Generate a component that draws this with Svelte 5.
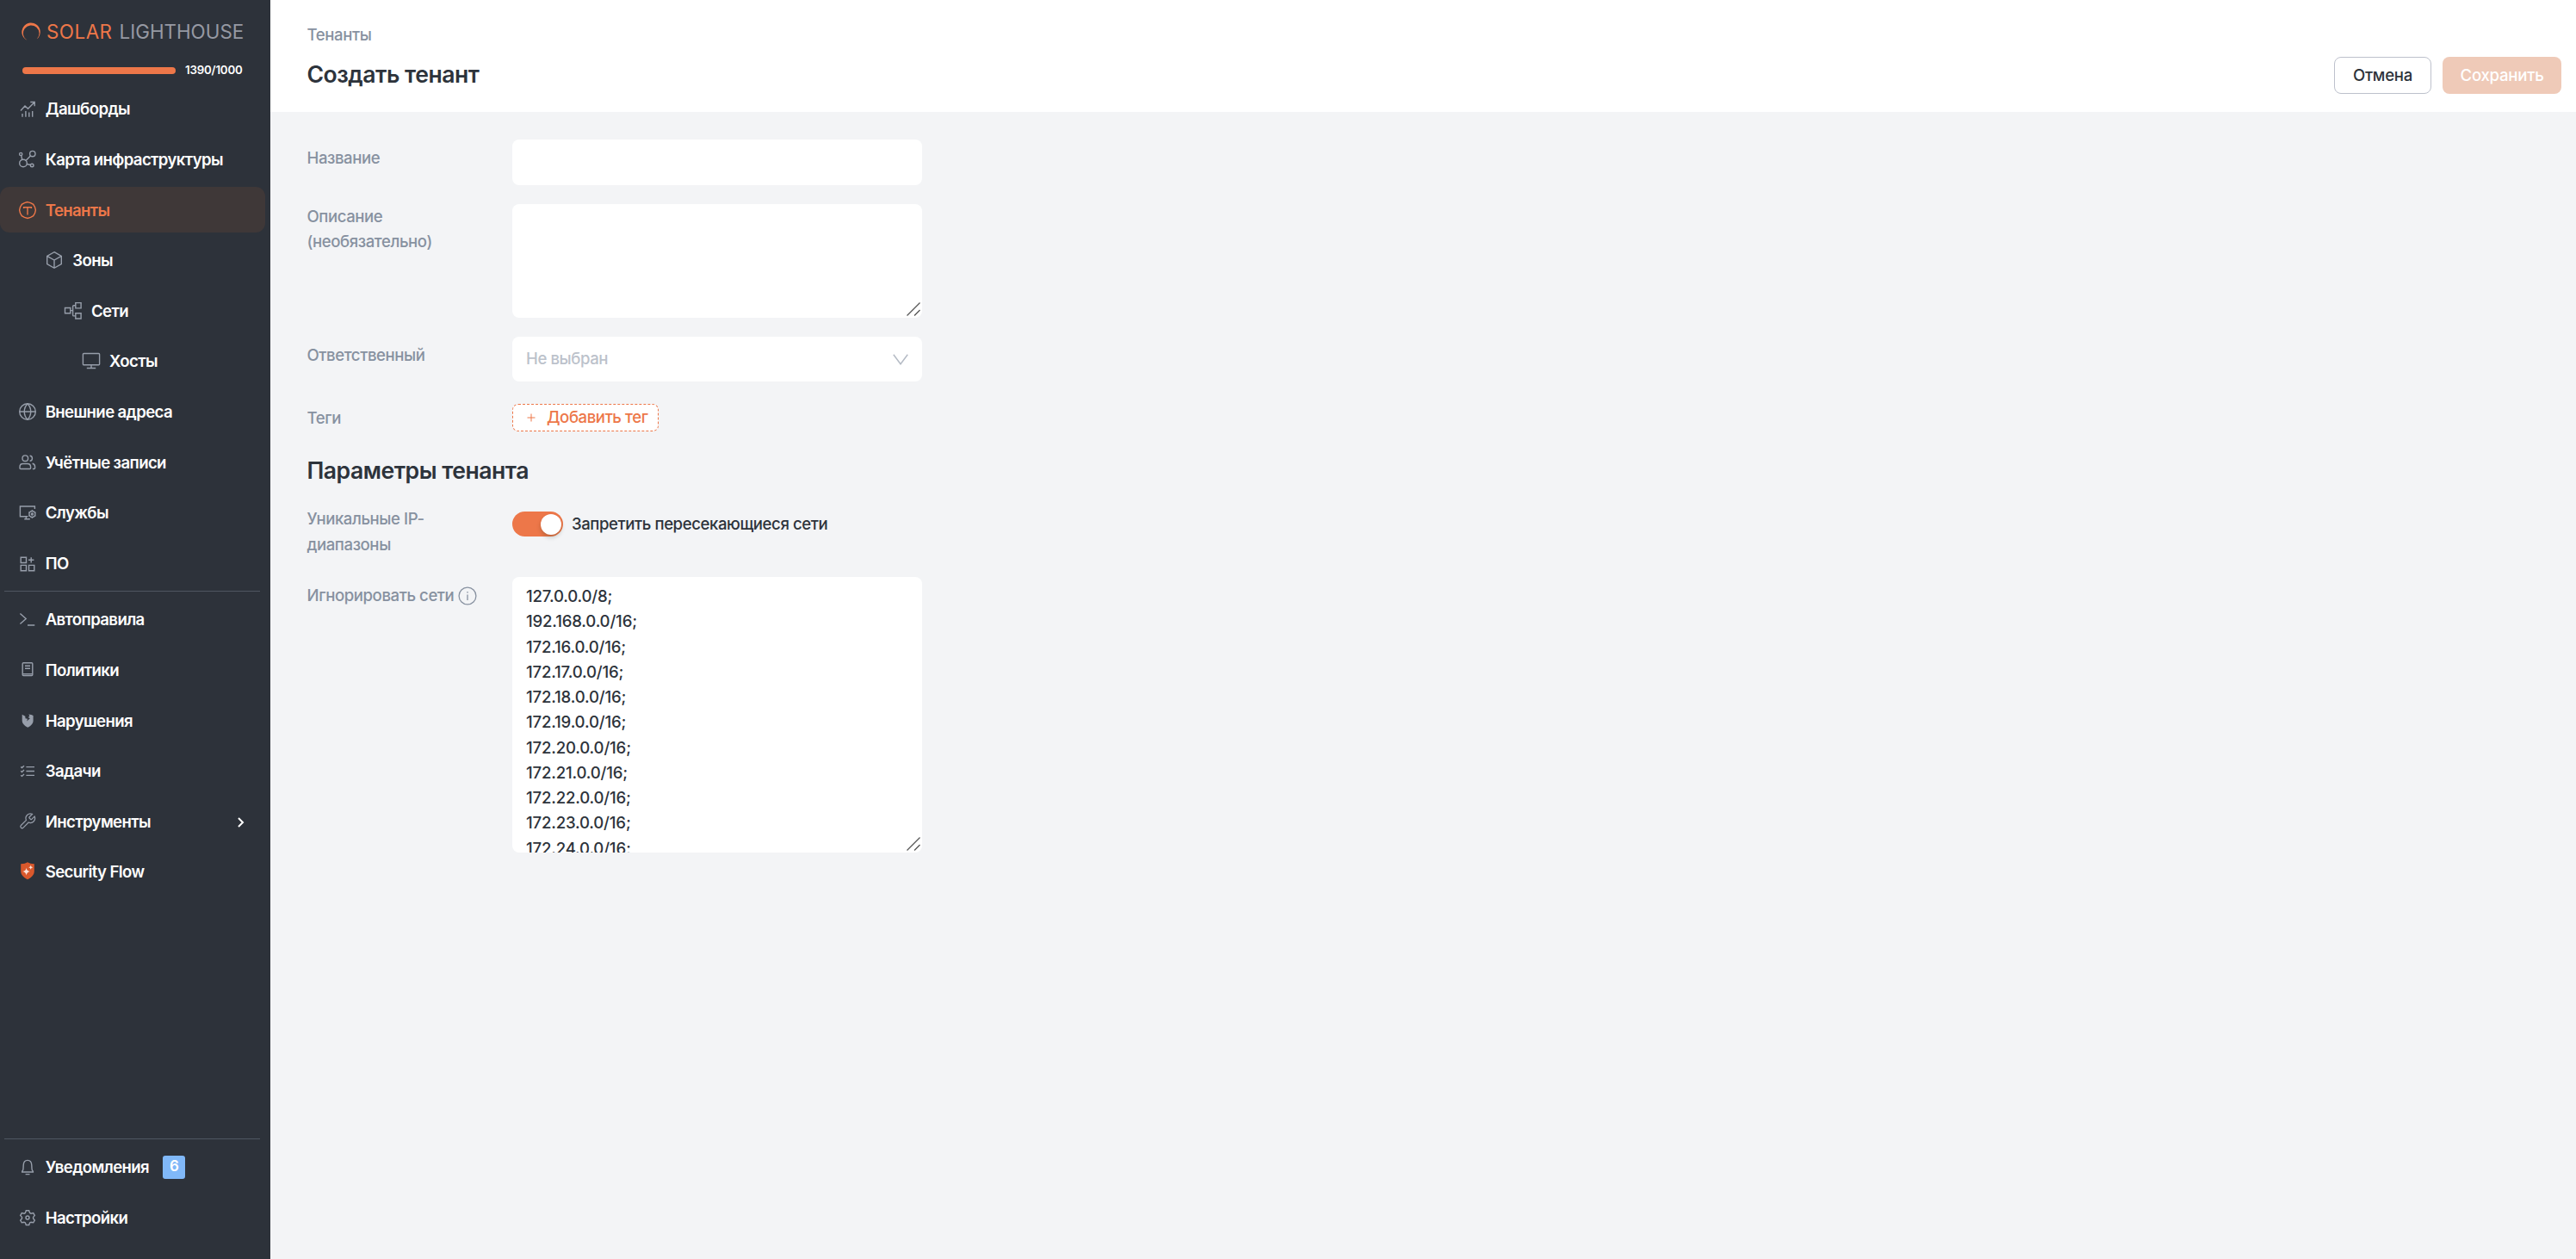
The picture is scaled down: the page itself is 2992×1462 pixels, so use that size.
<script lang="ts">
  type NavItem = {
    label: string
    icon: string
    level?: number
    active?: boolean
    arrow?: boolean
    badge?: number
  }

  const assets: NavItem[] = [
    { label: 'Дашборды', icon: 'dashboard' },
    { label: 'Карта инфраструктуры', icon: 'map' },
    { label: 'Тенанты', icon: 'tenant', active: true },
    { label: 'Зоны', icon: 'cube', level: 1 },
    { label: 'Сети', icon: 'network', level: 2 },
    { label: 'Хосты', icon: 'host', level: 3 },
    { label: 'Внешние адреса', icon: 'globe' },
    { label: 'Учётные записи', icon: 'users' },
    { label: 'Службы', icon: 'service' },
    { label: 'ПО', icon: 'apps' },
  ]

  const control: NavItem[] = [
    { label: 'Автоправила', icon: 'terminal' },
    { label: 'Политики', icon: 'policy' },
    { label: 'Нарушения', icon: 'violation' },
    { label: 'Задачи', icon: 'tasks' },
    { label: 'Инструменты', icon: 'wrench', arrow: true },
    { label: 'Security Flow', icon: 'shield' },
  ]

  const bottom: NavItem[] = [
    { label: 'Уведомления', icon: 'bell', badge: 6 },
    { label: 'Настройки', icon: 'gear' },
  ]

  const icons: Record<string, string> = {
    dashboard:
      '<path d="M4 13.5 9 8l3.5 3.2L20 3.7M15.3 3.5h4.9v4.7M6 17v3.8M9.9 14v6.8M13.8 15.5v5.3M17.7 14v6.8"/>',
    map: '<circle cx="4.2" cy="6" r="1.6"/><circle cx="17.8" cy="5.6" r="3.2"/><circle cx="7" cy="16.5" r="4.3"/><circle cx="17.2" cy="19" r="1.8"/><path d="m4.7 7.6 1 4.8M10 13.4l5.4-5.5M11.2 17.5l4.2 1"/>',
    tenant:
      '<path d="M12 2.6 15.6 3.6 18.7 5.3 20.5 8.4 21.4 12 20.5 15.6 18.7 18.7 15.6 20.4 12 21.4 8.4 20.4 5.3 18.7 3.5 15.6 2.6 12 3.5 8.4 5.3 5.3 8.4 3.6Z"/><path d="M7.6 10V8.7h8.8V10M12 8.7v8.7"/>',
    cube: '<path d="m12 2.7 8.3 4.6v9.4L12 21.3l-8.3-4.6V7.3ZM3.7 7.3 12 12l8.3-4.7M12 12v9.3"/>',
    network:
      '<path d="M2.5 8.5h6.3v6.3H2.5ZM14.8 2.6h6.3v6.3h-6.3ZM14.8 14.7h6.3V21h-6.3ZM8.8 11.6h2.8M14.8 5.7h-2.2q-1 0-1 1v10.2q0 1 1 1h2.2"/>',
    host: '<rect x="2.4" y="3.5" width="19.2" height="13.2" rx="1"/><path d="M12 16.7v3.8M6.8 20.5h10.4"/>',
    globe:
      '<circle cx="12" cy="12" r="9.3"/><path d="M2.7 12h18.6M12 2.7c-5 5.2-5 13.4 0 18.6M12 2.7c5 5.2 5 13.4 0 18.6"/>',
    users:
      '<circle cx="9.3" cy="7.2" r="3.3"/><path d="M3 18.5v-1.3q0-3.7 3.8-3.7h5q3.8 0 3.8 3.7v1.3q0 1-1 1H4q-1 0-1-1ZM14.6 4.2c3.8.2 3.8 5.8 0 6M17.6 13.2c2.3.5 3 1.8 3 3.7v1.5q0 1.1-1.1 1.1h-1.6"/>',
    service:
      '<path d="M20.4 8V5H3.4v11.8h9M10.3 16.8v2.8M8.3 19.7h6.5"/><circle cx="17.4" cy="14" r="3.5"/><circle cx="17.4" cy="14" r="1"/><path d="M17.4 9.3v1.2M17.4 17.5v1.2M13.4 11.7l1 .6M20.4 15.7l1 .6M13.4 16.3l1-.6M20.4 12.3l1-.6"/>',
    apps: '<path d="M4.2 5.2h6.3v6.3H4.2ZM4.2 14.4h6.3v6.3H4.2ZM13.5 14.4h6.3v6.3h-6.3ZM16.2 5.2v6.3M13 8.3h6.4"/>',
    terminal: '<path d="m3.4 5.4 6.8 6.1-6.8 6.1M12 19h8.3"/>',
    policy: '<rect x="6.2" y="3.7" width="11.6" height="14.8" rx="1"/><path d="M9 7.3h6M9 10.3h6M6.2 16.6h11.6"/>',
    violation:
      '<path fill="currentColor" stroke="none" d="m5.7 4.8 3.6 2 .2 2.4 2.5.6-.8 2.800 3.800-3.600-2.200-.8 1.600-2-1.200-1.800 3.200.5 2.200 1v5.800c0 3.300-2.500 6.200-6.300 8.100-3.800-1.900-6.600-4.800-6.600-8.100Z"/>',
    tasks:
      '<path d="M10.4 7.6H20M10.4 12.5H20M10.4 17.4H20M4.2 7.4l1.3 1.2L8 6.2M4.2 12.3l1.3 1.2L8 11.1M4.2 17.2l1.3 1.2L8 16"/>',
    wrench:
      '<path transform="translate(1.2 1.2) scale(.88)" d="M14.7 6.3a1 1 0 0 0 0 1.4l1.6 1.6a1 1 0 0 0 1.4 0l3.77-3.77a6 6 0 0 1-7.94 7.94l-6.91 6.91a2.12 2.12 0 0 1-3-3l6.91-6.91a6 6 0 0 1 7.94-7.94Z"/>',
    bell: '<path d="M5.7 18v-.7Q7 16.200 7 14.100l.2-4C7.400 6.600 9 4.400 12 4.400s4.600 2.200 4.800 5.700l.2 4q0 2.100 1.400 3.200v.7ZM9.600 20.600h4.900"/>',
    gear: '<path d="M10.300 3.800h3.400l.9 2.600 1.500.8 2.600-.6 1.600 2.800-1.700 2v1.500l1.700 2.200-1.600 2.700-2.700-.6-1.400.8-.9 2.500h-3.400l-.9-2.500-1.400-.8-2.700.6-1.600-2.700 1.800-2.200v-1.500L3.700 9.400l1.600-2.800 2.700.6 1.400-.8Z"/><circle cx="12" cy="12" r="2"/>',
    shield:
      '<path fill="#d9582c" stroke="none" d="M12 1.300c2 1.300 4.600 1.900 7.800 1.900v8.600c0 4.300-3.600 7.500-7.800 9.400-4.200-1.900-7.800-5.100-7.800-9.400V3.200c3.200 0 5.800-.6 7.800-1.900Z"/><path fill="#fbe3d9" stroke="none" d="M10.600 7.800q.6 3.700 4.300 4.300-3.700.6-4.300 4.300-.6-3.700-4.300-4.300 3.700-.6 4.300-4.300ZM15.700 4.800q.3 2.200 2.500 2.500-2.200.3-2.500 2.500-.3-2.200-2.500-2.500 2.200-.3 2.500-2.500Z"/>',
  }

  const networks = [
    '127.0.0.0/8;',
    '192.168.0.0/16;',
    ...Array.from({ length: 16 }, (_, i) => `172.${i + 16}.0.0/16;`),
  ].join('\n')

  let uniqueRanges = $state(true)
</script>

{#snippet nav(items: NavItem[])}
  <ul class="nav">
    {#each items as item (item.label)}
      <li class="nav-item level-{item.level ?? 0}" class:active={item.active}>
        <svg class="nav-icon" viewBox="0 0 24 24">{@html icons[item.icon]}</svg>
        <span>{item.label}</span>
        {#if item.badge}
          <span class="badge">{item.badge}</span>
        {/if}
        {#if item.arrow}
          <svg class="nav-arrow" viewBox="0 0 10 14"><path d="m2 2 5 5-5 5" /></svg>
        {/if}
      </li>
    {/each}
  </ul>
{/snippet}

{#snippet grip()}
  <svg class="grip" viewBox="0 0 16 16"><path d="m.5 15.5 15-15M9 15.5 15.5 9" /></svg>
{/snippet}

<div class="layout">
  <aside class="sidebar">
    <div class="logo">
      <svg class="logo-mark" viewBox="0 0 22 22">
        <path d="M6.5 20.8A10.7 10.7 0 1 1 17.7 19.5A9.3 9.3 0 1 0 6.5 20.8Z" />
      </svg>
      <span class="logo-solar">SOLAR</span>
      <span class="logo-name">LIGHTHOUSE</span>
    </div>
    <div class="license">
      <div class="license-bar"></div>
      <span class="license-count">1390/1000</span>
    </div>
    {@render nav(assets)}
    <hr />
    {@render nav(control)}
    <div class="spacer"></div>
    <hr />
    {@render nav(bottom)}
  </aside>

  <div class="page">
    <header class="header">
      <div class="heading">
        <div class="breadcrumb">Тенанты</div>
        <h1>Создать тенант</h1>
      </div>
      <div class="actions">
        <button class="btn cancel">Отмена</button>
        <button class="btn save" disabled>Сохранить</button>
      </div>
    </header>

    <main class="form">
      <div class="row">
        <label class="label" for="name">Название</label>
        <input id="name" class="field" type="text" />
      </div>
      <div class="row row-top">
        <label class="label" for="description">Описание<br />(необязательно)</label>
        <div class="area">
          <textarea id="description" class="field description"></textarea>
          {@render grip()}
        </div>
      </div>
      <div class="row">
        <span class="label">Ответственный</span>
        <div class="field select">
          <span>Не выбран</span>
          <svg class="select-arrow" viewBox="0 0 18 13"><path d="m.8.8 8.2 11 8.2-11" /></svg>
        </div>
      </div>
      <div class="row row-tags">
        <span class="label">Теги</span>
        <button class="add-tag">
          <svg class="plus" viewBox="0 0 10 10"><path d="M5 .5v9M.5 5h9" /></svg>
          Добавить тег
        </button>
      </div>

      <h2>Параметры тенанта</h2>

      <div class="row row-switch">
        <span class="label">Уникальные IP-<br />диапазоны</span>
        <div class="switch-line">
          <button
            class="switch"
            class:on={uniqueRanges}
            role="switch"
            aria-checked={uniqueRanges}
            aria-label="Уникальные IP-диапазоны"
            onclick={() => (uniqueRanges = !uniqueRanges)}
          ></button>
          <span>Запретить пересекающиеся сети</span>
        </div>
      </div>
      <div class="row">
        <label class="label label-info" for="ignored">
          Игнорировать сети
          <svg class="info" viewBox="0 0 22 22">
            <circle cx="11" cy="11" r="9.9" />
            <path d="M11 9.5V16M11 6v1.6" />
          </svg>
        </label>
        <div class="area">
          <textarea id="ignored" class="field ignored" value={networks}></textarea>
          {@render grip()}
        </div>
      </div>
    </main>
  </div>
</div>

<style>
  :global(body) {
    margin: 0;
    background: #f3f4f6;
  }
  .layout {
    display: flex;
    height: 1462px;
    overflow: hidden;
    font-family: Inter, 'Liberation Sans', sans-serif;
    font-size: 18.6px;
    font-weight: 500;
    line-height: 29.25px;
    letter-spacing: -0.43px;
    color: #2d333b;
  }
  button,
  input,
  textarea {
    font: inherit;
    letter-spacing: inherit;
    color: inherit;
  }

  .sidebar {
    width: 314px;
    flex: none;
    box-sizing: border-box;
    display: flex;
    flex-direction: column;
    background: #2d323a;
    color: #fff;
    padding-bottom: 16px;
  }
  .logo {
    display: flex;
    align-items: center;
    height: 30px;
    padding: 22px 0 0 25px;
    font-size: 22.4px;
    font-weight: 400;
    white-space: nowrap;
  }
  .logo-mark {
    width: 22px;
    height: 22px;
    margin-right: 7px;
    fill: #ed7749;
  }
  .logo-solar {
    width: 84.5px;
    color: #ed7749;
    letter-spacing: 0.5px;
  }
  .logo-name {
    color: #9699a3;
    letter-spacing: 0;
  }
  .license {
    display: flex;
    align-items: center;
    gap: 11px;
    height: 20px;
    margin: 20px 0 8px 26px;
  }
  .license-bar {
    width: 178px;
    height: 8px;
    border-radius: 4px;
    background: #ed7749;
  }
  .license-count {
    font-size: 13.3px;
    font-weight: 600;
    letter-spacing: -0.2px;
  }

  .nav {
    margin: 0;
    padding: 0;
    list-style: none;
  }
  .nav-item {
    display: flex;
    align-items: center;
    width: 308px;
    height: 53px;
    margin-bottom: 5.6px;
    box-sizing: border-box;
    padding-left: 19.7px;
    font-weight: 600;
    letter-spacing: -0.62px;
    white-space: nowrap;
  }
  .level-1 {
    padding-left: 51.3px;
  }
  .level-2 {
    padding-left: 73px;
  }
  .level-3 {
    padding-left: 94px;
  }
  .nav-icon {
    width: 24px;
    height: 24px;
    flex: none;
    margin-right: 9px;
    color: #979eaa;
    fill: none;
    stroke: currentColor;
    stroke-width: 1.4;
  }
  .nav-icon + span {
    padding-top: 1px;
  }
  .active {
    background: #3f3838;
    border-radius: 11px;
    color: #ed7749;
  }
  .active .nav-icon {
    color: #ed7749;
  }
  .badge {
    width: 26px;
    height: 27px;
    margin-left: 16px;
    border-radius: 3px;
    background: #80b8f8;
    font-size: 17px;
    line-height: 25px;
    text-align: center;
  }
  .nav-arrow {
    width: 10px;
    height: 14px;
    margin: 2px 23px 0 auto;
    fill: none;
    stroke: #fff;
    stroke-width: 2;
  }
  hr {
    width: 297px;
    height: 1px;
    margin: 0 0 6px 5px;
    border: 0;
    background: #4f5661;
    flex: none;
  }
  .spacer {
    flex: 1;
  }

  .page {
    flex: 1;
  }
  .header {
    display: flex;
    justify-content: space-between;
    box-sizing: border-box;
    height: 130px;
    padding: 26px 17px 0 42.5px;
    background: #fff;
  }
  .breadcrumb {
    color: #8791a0;
  }
  h1,
  h2 {
    margin: 0;
    font-size: 26.6px;
    font-weight: 600;
    line-height: 36px;
    letter-spacing: -0.5px;
  }
  h1 {
    margin-top: 13px;
  }
  .actions {
    display: flex;
    gap: 13px;
    padding-top: 40px;
  }
  .btn {
    height: 43px;
    padding: 0;
    border-radius: 8px;
    letter-spacing: -0.25px;
  }
  .cancel {
    width: 113px;
    border: 1px solid #bdc1cc;
    background: #fff;
  }
  .save {
    width: 138px;
    border: 0;
    background: #efcab8;
    color: #fff;
  }

  .form {
    padding: 32px 0 0 42.5px;
  }
  .row {
    display: grid;
    grid-template-columns: 238.5px 476px;
    align-items: start;
    margin-bottom: 22px;
  }
  .label {
    padding-top: 7px;
    color: #8791a0;
  }
  .row-top .label {
    padding-top: 0;
  }
  .field {
    display: block;
    box-sizing: border-box;
    width: 100%;
    height: 53px;
    border: 0;
    border-radius: 8px;
    background: #fff;
    padding: 8px 16px;
    outline: none;
  }
  textarea {
    resize: none;
    overflow: hidden;
  }
  .area {
    position: relative;
  }
  .description {
    height: 132px;
  }
  .ignored {
    height: 320px;
    letter-spacing: -0.18px;
  }
  .grip {
    position: absolute;
    right: 2px;
    bottom: 2px;
    width: 16px;
    height: 16px;
    stroke: #555;
    stroke-width: 1.3;
  }
  .select {
    display: flex;
    align-items: center;
    justify-content: space-between;
    height: 52px;
    color: #bcc2cb;
  }
  .select-arrow {
    width: 18px;
    height: 13px;
    fill: none;
    stroke: #b5bbc5;
    stroke-width: 1.5;
  }
  .row-tags {
    margin: 26px 0 27px;
  }
  .row-tags .label {
    padding-top: 2px;
  }
  .add-tag {
    display: flex;
    align-items: center;
    justify-self: start;
    width: 170px;
    height: 32px;
    box-sizing: border-box;
    padding: 0 0 0 16px;
    border: 1px dashed #ed7749;
    border-radius: 7px;
    background: #fff;
    color: #ed7749;
    white-space: nowrap;
  }
  .plus {
    width: 10px;
    height: 10px;
    flex: none;
    margin-right: 13px;
    stroke: currentColor;
  }
  .row-switch {
    margin: 23px 0;
  }
  .row-switch .label {
    padding-top: 0;
    line-height: 30px;
  }
  .switch-line {
    display: flex;
    align-items: center;
    gap: 10px;
    margin-top: 7px;
  }
  .switch {
    display: flex;
    width: 59px;
    height: 29px;
    padding: 2.5px;
    border: 0;
    border-radius: 15px;
    background: #bcc2cb;
  }
  .switch::before {
    content: '';
    width: 24px;
    height: 24px;
    border-radius: 50%;
    background: #fff;
    box-shadow: 0 3px 5px rgba(0, 35, 11, 0.2);
  }
  .switch.on {
    justify-content: flex-end;
    background: #ed7749;
  }
  .label-info {
    display: flex;
    align-items: center;
    gap: 5px;
  }
  .info {
    width: 22px;
    height: 22px;
    fill: none;
    stroke: currentColor;
    stroke-width: 1.3;
  }
</style>
